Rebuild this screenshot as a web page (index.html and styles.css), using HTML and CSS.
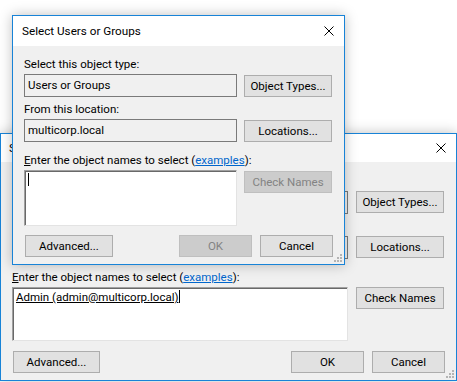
FILE: index.html
```html
<!DOCTYPE html>
<html lang="en">
<head>
  <meta charset="UTF-8" />
  <title>Select Users or Groups</title>
  <link rel="stylesheet" href="styles.css">
</head>
<body>

<div class="desktop">

  <!-- window behind -->
  <div class="window back">
    <div class="titlebar">
      <span class="title">Select Users or Groups</span>
      <svg class="close" width="10" height="10" viewBox="0 0 10 10"><path d="M0.5 0.5L9.5 9.5M9.5 0.5L0.5 9.5" stroke="#000" stroke-width="1"/></svg>
    </div>
    <div class="body">
      <div class="label">Select this object type:</div>
      <div class="row">
        <div class="field">Users or Groups</div>
        <button class="btn">Object Types...</button>
      </div>
      <div class="label gap-s">From this location:</div>
      <div class="row">
        <div class="field">multicorp.local</div>
        <button class="btn">Locations...</button>
      </div>
      <div class="label gap-l"><u>E</u>nter the object names to select (<a href="#">examples</a>):</div>
      <div class="row">
        <div class="names"><span class="resolved">Admin (admin@multicorp.local)</span><span class="caret"></span></div>
        <button class="btn">Check Names</button>
      </div>
      <div class="actions">
        <button class="btn adv">Advanced...</button>
        <div class="group">
          <button class="btn small">OK</button>
          <button class="btn small">Cancel</button>
        </div>
      </div>
    </div>
    <svg class="grip" width="10" height="10" viewBox="0 0 10 10">
      <rect x="8" y="2" width="2" height="2"/><rect x="5" y="5" width="2" height="2"/><rect x="8" y="5" width="2" height="2"/>
      <rect x="2" y="8" width="2" height="2"/><rect x="5" y="8" width="2" height="2"/><rect x="8" y="8" width="2" height="2"/>
    </svg>
  </div>

  <!-- dialog in front -->
  <div class="window front">
    <div class="titlebar">
      <span class="title">Select Users or Groups</span>
      <svg class="close" width="10" height="10" viewBox="0 0 10 10"><path d="M0.5 0.5L9.5 9.5M9.5 0.5L0.5 9.5" stroke="#000" stroke-width="1"/></svg>
    </div>
    <div class="body">
      <div class="label">Select this object type:</div>
      <div class="row">
        <div class="field">Users or Groups</div>
        <button class="btn">Object Types...</button>
      </div>
      <div class="label gap-s">From this location:</div>
      <div class="row">
        <div class="field">multicorp.local</div>
        <button class="btn">Locations...</button>
      </div>
      <div class="label gap-l"><u>E</u>nter the object names to select (<a href="#">examples</a>):</div>
      <div class="row">
        <div class="names"><span class="caret"></span></div>
        <button class="btn" disabled>Check Names</button>
      </div>
      <div class="actions">
        <button class="btn adv">Advanced...</button>
        <div class="group">
          <button class="btn small" disabled>OK</button>
          <button class="btn small">Cancel</button>
        </div>
      </div>
    </div>
    <svg class="grip" width="10" height="10" viewBox="0 0 10 10">
      <rect x="8" y="2" width="2" height="2"/><rect x="5" y="5" width="2" height="2"/><rect x="8" y="5" width="2" height="2"/>
      <rect x="2" y="8" width="2" height="2"/><rect x="5" y="8" width="2" height="2"/><rect x="8" y="8" width="2" height="2"/>
    </svg>
  </div>

</div>

</body>
</html>
```

FILE: styles.css
```css
:root {
  --accent: #1883d7;
  --face: #f0f0f0;
  --btn: #e1e1e1;
  --btn-border: #adadad;
}

* {
  box-sizing: border-box;
}

html, body {
  margin: 0;
  height: 100%;
  background: #fff;
  overflow: hidden;
}

body {
  font-family: Roboto, "Liberation Sans", sans-serif;
  font-size: 11.5px;
  color: #000;
}

.desktop {
  position: relative;
  width: 457px;
  height: 382px;
}

/* windows sit on the desktop at their own spots */
.window {
  position: absolute;
  display: flex;
  flex-direction: column;
  background: var(--face);
  border: 1px solid var(--accent);
  box-shadow: 0 0 12px rgba(0,0,0,0.25);
}

.window.back {
  left: 0;
  top: 133px;
  width: 457px;
  height: 248px;
}

.window.front {
  left: 12px;
  top: 15px;
  width: 333px;
  height: 250px;
}

.titlebar {
  display: flex;
  align-items: center;
  justify-content: space-between;
  height: 30px;
  padding: 0 10px 0 9px;
  background: #fff;
}

.back .titlebar {
  height: 28px;
  padding-left: 8px;
}

.title {
  font-size: 11.7px;
}

.body {
  flex: 1;
  padding: 10px 11px 0 11px;
}

.back .body {
  padding-top: 11px;
}

.label {
  height: 16px;
  line-height: 16px;
  margin-bottom: 2px;
  white-space: nowrap;
}

.label.gap-s {
  margin-top: 4px;
}

.label.gap-l {
  margin-top: 10px;
}

.label a {
  color: #0066cc;
}

.row {
  display: flex;
  align-items: flex-start;
  gap: 7px;
}

.back .row {
  gap: 8px;
}

.field {
  width: 213px;
  height: 23px;
  line-height: 21px;
  padding: 0 3px;
  border: 1px solid #7a7a7a;
  white-space: nowrap;
}

.back .field {
  width: 336px;
}

.names {
  width: 213px;
  height: 56px;
  padding: 2px 2px;
  background: #fff;
  border: 1px solid;
  border-color: #a0a0a0 #e3e3e3 #e3e3e3 #a0a0a0;
  box-shadow: inset 1px 1px 0 #696969;
  line-height: 14px;
}

.back .names {
  width: 336px;
  height: 54px;
  padding-left: 3px;
}

.resolved {
  text-decoration: underline;
}

.caret {
  display: inline-block;
  width: 1px;
  height: 13px;
  margin-left: 1px;
  vertical-align: -2px;
  background: #000;
}

.btn {
  width: 88px;
  height: 22px;
  margin-top: 1px;
  padding: 0;
  font: inherit;
  color: #000;
  text-align: center;
  background: var(--btn);
  border: 1px solid var(--btn-border);
}

.back .btn {
  margin-top: 0;
}

.btn:disabled {
  color: #838383;
  background: #cccccc;
  border-color: #bfbfbf;
}

.actions {
  display: flex;
  justify-content: space-between;
  margin-top: 9px;
}

.back .actions {
  margin-top: 10px;
}

.actions .btn {
  margin-top: 0;
}

.btn.adv {
  margin-left: 1px;
}

.back .btn.adv {
  width: 87px;
}

.group {
  display: flex;
  gap: 8px;
}

.btn.small {
  width: 73px;
}

/* size grip in the corner */
.grip {
  position: absolute;
  right: 2px;
  bottom: 2px;
  fill: #b4b4b4;
}
```
